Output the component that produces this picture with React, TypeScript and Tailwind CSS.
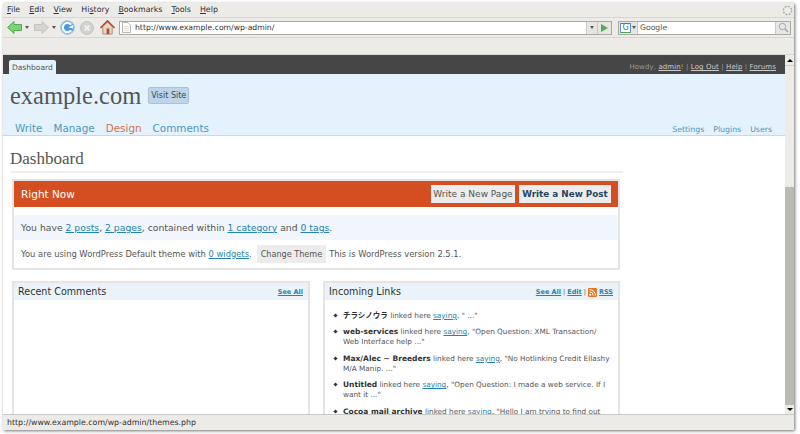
const serif = "font-['Liberation_Serif',serif]";

function BackArrow() {
  return (
    <svg width="15" height="13" viewBox="0 0 15 13">
      <path d="M0.5 6.5 L7 0.5 V3.5 H14.5 V9.5 H7 V12.5 Z" fill="#7fd07a" stroke="#5aa856" strokeWidth="1" />
    </svg>
  );
}

function ForwardArrow() {
  return (
    <svg width="15" height="13" viewBox="0 0 15 13">
      <path d="M14.5 6.5 L8 0.5 V3.5 H0.5 V9.5 H8 V12.5 Z" fill="#d6d6d0" stroke="#c4c4be" strokeWidth="1" />
    </svg>
  );
}

function Reload() {
  return (
    <svg width="15" height="15" viewBox="0 0 16 16">
      <circle cx="8" cy="8" r="7.5" fill="#4a9be0" />
      <circle cx="8" cy="8" r="7" fill="none" stroke="#9ccdf2" strokeWidth="1" />
      <path d="M12 5 A5 5 0 1 0 12 11" fill="none" stroke="#fff" strokeWidth="2.4" />
      <path d="M9 8 L14 5 V9 Z" fill="#fff" />
    </svg>
  );
}

function StopIcon() {
  return (
    <svg width="14" height="14" viewBox="0 0 15 15">
      <circle cx="7.5" cy="7.5" r="7" fill="#d2d2ce" stroke="#c4c4c0" />
      <path d="M5 5 L10 10 M10 5 L5 10" stroke="#f4f4f2" strokeWidth="2" />
    </svg>
  );
}

function HomeIcon() {
  return (
    <svg width="15" height="15" viewBox="0 0 16 16">
      <path d="M3 7 V15 H13 V7 L8 2 Z" fill="#e8d8c0" stroke="#a98a70" />
      <path d="M0.5 8.5 L8 1 L15.5 8.5" fill="none" stroke="#b5503a" strokeWidth="1.8" />
      <rect x="7" y="9" width="3" height="6" fill="#a5553c" />
    </svg>
  );
}

function PageIcon() {
  return (
    <svg width="9" height="11" viewBox="0 0 10 12">
      <path d="M0.5 0.5 H6.5 L9.5 3.5 V11.5 H0.5 Z" fill="#fff" stroke="#a9a9a5" />
      <path d="M2 5 H8 M2 7 H8 M2 9 H8" stroke="#d8d8d4" />
    </svg>
  );
}

function Spinner() {
  return (
    <svg width="11" height="11" viewBox="0 0 12 12">
      <circle cx="6" cy="6" r="4.5" fill="none" stroke="#a8a8a4" strokeWidth="1.6" strokeDasharray="2 1.5" />
    </svg>
  );
}

function Magnifier() {
  return (
    <svg width="11" height="11" viewBox="0 0 11 11">
      <circle cx="4.5" cy="4.5" r="3.2" fill="#e4eaf0" stroke="#a0a8b0" />
      <path d="M7 7 L10 10" stroke="#a0a8b0" strokeWidth="1.6" />
    </svg>
  );
}

function RssIcon() {
  return (
    <svg width="9" height="9" viewBox="0 0 9 9">
      <rect width="9" height="9" rx="1" fill="#e8761f" />
      <circle cx="2.3" cy="6.8" r="1" fill="#fff" />
      <path d="M1.5 3.8 A3.8 3.8 0 0 1 5.3 7.5 M1.5 1.6 A6 6 0 0 1 7.5 7.5" fill="none" stroke="#fff" strokeWidth="1" />
    </svg>
  );
}

function Caret() {
  return <span className="block h-0 w-0 border-x-[2px] border-t-[3px] border-x-transparent border-t-[#555]" />;
}

function Menu({ first, rest }: { first: string; rest: string }) {
  return (
    <span>
      <span className="underline">{first}</span>
      {rest}
    </span>
  );
}

function Link({ children }: { children: string }) {
  return <a className="text-[#2583ad] underline">{children}</a>;
}

const links = [
  { name: "チラシノウラ", text: ', " ..."' },
  { name: "web-services", text: ', "Open Question: XML Transaction/ Web Interface help ..."' },
  { name: "Max/Alec ~ Breeders", text: ', "No Hotlinking Credit Ellashy M/A Manip. ..."' },
  { name: "Untitled", text: ', "Open Question: I made a web service. If I want it ..."' },
  { name: "Cocoa mail archive", text: ', "Hello I am trying to find out' },
];

export default function App() {
  return (
    <div className="h-[434px] w-[800px] overflow-hidden bg-white pl-[3px] pt-[3px] font-['DejaVu_Sans',sans-serif]">
      <div className="flex h-[427px] w-[791px] flex-col bg-[#edebe8] shadow-[1px_1px_3px_rgba(0,0,0,0.55)]">
        <div className="flex h-[15px] shrink-0 items-center gap-[9px] border-b border-[#d8d6d2] pl-[4px] pr-[1px] text-[7.9px] text-[#333]">
          <Menu first="F" rest="ile" />
          <Menu first="E" rest="dit" />
          <Menu first="V" rest="iew" />
          <span>Hi<span className="underline">s</span>tory</span>
          <Menu first="B" rest="ookmarks" />
          <Menu first="T" rest="ools" />
          <Menu first="H" rest="elp" />
          <span className="ml-auto"><Spinner /></span>
        </div>

        <div className="flex h-[20px] shrink-0 items-center border-b border-[#d8d6d2] pl-[4px]">
          <BackArrow />
          <span className="ml-[3px]"><Caret /></span>
          <span className="ml-[5px]"><ForwardArrow /></span>
          <span className="ml-[3px]"><Caret /></span>
          <span className="ml-[4px]"><Reload /></span>
          <span className="ml-[5px]"><StopIcon /></span>
          <span className="ml-[6px]"><HomeIcon /></span>
          <div className="ml-[4px] flex h-[14px] w-[493px] items-center border border-[#a9a9a5] bg-white pl-[2px] text-[7.7px] text-[#333]">
            <PageIcon />
            <span className="ml-[4px]">http://www.example.com/wp-admin/</span>
            <span className="ml-auto flex h-full w-[11px] items-center justify-center border-l border-[#c8c8c4] bg-[#e8e6e3]"><Caret /></span>
            <span className="flex h-full w-[14px] items-center justify-center border-l border-[#c8c8c4] bg-[#e8e6e3]">
              <span className="block h-0 w-0 border-y-[4px] border-l-[7px] border-y-transparent border-l-[#58a858]" />
            </span>
          </div>
          <div className="ml-[6px] flex h-[14px] w-[173px] items-center border border-[#a9a9a5] bg-white text-[7.7px] text-[#555]">
            <span className="flex h-full w-[19px] items-center gap-[1px] border-r border-[#c8c8c4] bg-[#e8e6e3] pl-[1px]">
              <span className="flex h-[10px] w-[11px] items-center justify-center border border-[#5b8fd8] border-b-[#4aa84a] border-t-[#d8554a] bg-white text-[8px] leading-none text-[#3a6fd0]">G</span>
              <Caret />
            </span>
            <span className="ml-[2px]">Google</span>
            <span className="ml-auto flex h-full w-[15px] items-center justify-center border-l border-[#c8c8c4] bg-[#e8e6e3]"><Magnifier /></span>
          </div>
        </div>

        <div className="h-[17px] shrink-0 border-b border-[#d8d6d2]" />

        <div className="relative flex min-h-0 flex-1">
          <div className="min-w-0 flex-1 overflow-hidden bg-white">
            <div className="flex h-[19px] items-end justify-between bg-[#464646] pl-[6px] pr-[9px]">
              <span className="rounded-t-[2px] bg-[#e4f2fd] px-[3px] pb-[2px] pt-[3px] text-[7.5px] leading-[9px] text-[#555]">Dashboard</span>
              <span className="pb-[2px] text-[7px] leading-[9px] tracking-[0.1px] text-[#999]">
                Howdy, <span className="text-[#ccc] underline">admin</span>! | <span className="text-[#ccc] underline">Log Out</span> | <span className="text-[#ccc] underline">Help</span> | <span className="text-[#ccc] underline">Forums</span>
              </span>
            </div>

            <div className="h-[62px] border-b border-[#c6d9e9] bg-[#e4f2fd] pl-[7px] pr-[13px]">
              <div className="flex items-center pt-[7px]">
                <span className={`text-[24.5px] leading-[29px] text-[#555] ${serif}`}>example.com</span>
                <span className="ml-[7px] rounded-[2px] border border-[#a9c3d9] bg-[#bed4e8] px-[2px] py-[2px] text-[8px] leading-[11px] text-[#464646]">Visit Site</span>
              </div>
              <div className="mt-[11px] flex items-baseline text-[10.4px] leading-[14px] text-[#2583ad] opacity-80">
                <span className="ml-[5px]">Write</span>
                <span className="ml-[11px]">Manage</span>
                <span className="ml-[11px] text-[#d54e21]">Design</span>
                <span className="ml-[11px]">Comments</span>
                <span className="ml-auto text-[7.8px]">Settings</span>
                <span className="ml-[9px] text-[7.8px]">Plugins</span>
                <span className="ml-[9px] text-[7.8px]">Users</span>
              </div>
            </div>

            <div className="px-[7px] pt-[13px]">
              <h2 className={`w-[613px] border-b-2 border-[#f0f0f0] pb-[2px] text-[17px] leading-[20px] text-[#555] ${serif}`}>Dashboard</h2>

              <div className="ml-[2px] mt-[6px] w-[608px] border-2 border-[#e4e4e4] bg-white">
                <div className="flex h-[26px] items-center justify-between bg-[#d54e21] pl-[7px] pr-[7px]">
                  <span className="pt-[1px] text-[10.5px] text-white">Right Now</span>
                  <div className="flex gap-[4px]">
                    <span className="flex h-[18px] w-[84px] items-center justify-center bg-[#ececec] pt-[1px] text-[9px] text-[#555]">Write a New Page</span>
                    <span className="flex h-[18px] w-[92px] items-center justify-center bg-[#ececec] pt-[1px] text-[8.8px] font-bold text-[#264761]">Write a New Post</span>
                  </div>
                </div>
                <div className="mt-[8px] flex h-[25px] items-center bg-[#f0f6fc] pl-[7px] text-[9.25px] text-[#555]">
                  <span>You have <Link>2 posts</Link>, <Link>2 pages</Link>, contained within <Link>1 category</Link> and <Link>0 tags</Link>.</span>
                </div>
                <div className="flex h-[28px] items-center pl-[7px] text-[8.35px] text-[#555]">
                  <span>You are using WordPress Default theme with <Link>0 widgets</Link>.</span>
                  <span className="ml-[5px] bg-[#ececec] px-[4px] py-[3.5px] text-[8.1px] leading-[11px]">Change Theme</span>
                  <span className="ml-[3px]">This is WordPress version 2.5.1.</span>
                </div>
              </div>

              <div className="ml-[2px] mt-[11px] flex w-[608px] gap-[13px]">
                <div className="h-[200px] w-[298px] border-2 border-[#e4e4e4]">
                  <div className="flex h-[17px] items-center justify-between bg-[#eaf3fa] pl-[4px] pr-[5px] pt-[2px]">
                    <span className="text-[9.6px] text-[#333]">Recent Comments</span>
                    <span className="text-[6.5px] font-bold text-[#2583ad] underline">See All</span>
                  </div>
                </div>
                <div className="h-[200px] w-[297px] border-2 border-[#e4e4e4]">
                  <div className="flex h-[17px] items-center justify-between bg-[#eaf3fa] pl-[4px] pr-[5px] pt-[2px]">
                    <span className="text-[9.6px] text-[#333]">Incoming Links</span>
                    <span className="flex items-center gap-[2px] text-[6.5px] font-bold text-[#2583ad]">
                      <span className="underline">See All</span>
                      <span className="font-normal text-[#555]">|</span>
                      <span className="underline">Edit</span>
                      <span className="font-normal text-[#555]">|</span>
                      <RssIcon />
                      <span className="underline">RSS</span>
                    </span>
                  </div>
                  <ul className="mt-[11px] flex flex-col gap-[6.4px] pl-[18px] pr-[8px] text-[7.3px] leading-[10px] text-[#555]">
                    {links.map((l) => (
                      <li key={l.name} className="relative">
                        <span className="absolute -left-[9px] top-[3px] block h-[3px] w-[3px] rotate-45 bg-[#333]" />
                        <b className="font-['DejaVu_Sans','Noto_Sans_CJK_JP',sans-serif] text-[7.5px] text-[#333]">{l.name}</b> linked here <Link>saying</Link>{l.text}
                      </li>
                    ))}
                  </ul>
                </div>
              </div>
            </div>
          </div>

          <div className="flex w-[9px] shrink-0 flex-col pb-[16px]">
            <div className="flex h-[11px] shrink-0 items-center justify-center border-b border-[#ccc] bg-[#ecebe8]">
              <span className="block h-0 w-0 border-x-[3px] border-b-[3px] border-x-transparent border-b-black" />
            </div>
            <div className="h-[121px] shrink-0 bg-[#ecebe8]" />
            <div className="flex-1 bg-[#b9bbb3]" />
            <div className="flex h-[9px] shrink-0 items-center justify-center bg-[#ecebe8]">
              <span className="block h-0 w-0 border-x-[3px] border-t-[3px] border-x-transparent border-t-black" />
            </div>
          </div>

          <div className="absolute inset-x-0 bottom-0 flex h-[16px] items-center border-t border-[#c8c8c4] bg-[#edebe8] pl-[4px] text-[7.85px] text-[#333]">
            http://www.example.com/wp-admin/themes.php
          </div>
        </div>
      </div>
    </div>
  );
}
